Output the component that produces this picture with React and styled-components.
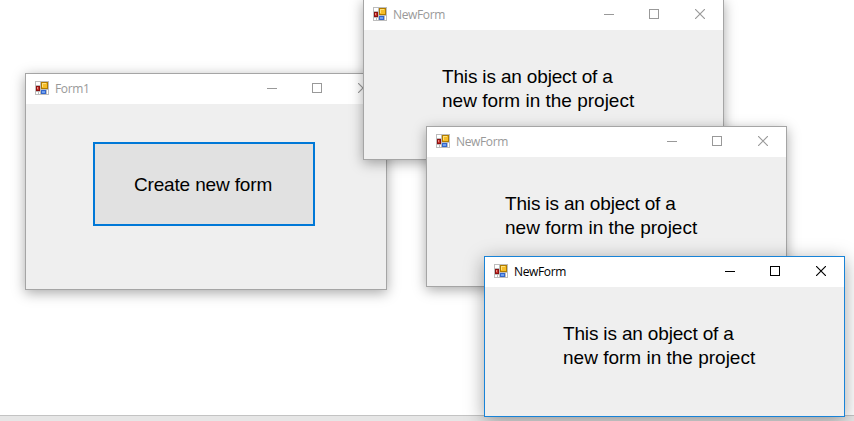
import React from "react";
import styled, { createGlobalStyle } from "styled-components";

const GlobalStyle = createGlobalStyle`
  *, *::before, *::after { box-sizing: border-box; }
  body { margin: 0; background: #fff; overflow: hidden; }
`;

const Desktop = styled.main`
  position: relative;
  display: flex;
  flex-direction: column;
  justify-content: flex-end;
  width: 854px;
  height: 421px;
  overflow: hidden;
  background: #fff;
  font-family: "Liberation Sans", Arial, sans-serif;
`;

const StatusStrip = styled.div`
  height: 6px;
  border-top: 1px solid #c3c3c3;
  background: #e6e6e6;
`;

/* Windows float freely on the desktop, so each one carries its own place. */
const Frame = styled.section`
  position: absolute;
  left: ${(p) => p.$x}px;
  top: ${(p) => p.$y}px;
  width: ${(p) => p.$w}px;
  height: ${(p) => p.$h}px;
  display: flex;
  flex-direction: column;
  border: 1px solid ${(p) => (p.$active ? "#1883d7" : "#a5a5a5")};
  background: #efefef;
  box-shadow: ${(p) =>
    p.$active
      ? "0 4px 18px rgba(0, 0, 0, 0.36)"
      : "0 3px 12px rgba(0, 0, 0, 0.34)"};
`;

const TitleBar = styled.header`
  flex: none;
  display: flex;
  align-items: center;
  height: 30px;
  padding: 0 18px 2px 9px;
  background: #fff;
  color: ${(p) => (p.$active ? "#000" : "#999")};
`;

const Title = styled.h1`
  flex: 1;
  margin: 2px 0 0 6px;
  font: 400 12px/16px "Open Sans", "Noto Sans", sans-serif;
  letter-spacing: -0.35px;
`;

const Controls = styled.div`
  display: flex;
  align-items: center;
`;

const ControlButton = styled.button`
  display: block;
  width: 10px;
  height: 10px;
  margin: 0 0 0 ${(p) => p.$gap || 0}px;
  padding: 0;
  border: 0;
  background: none;
  color: inherit;
`;

const Glyph = styled.svg`
  display: block;
`;

const Body = styled.div`
  flex: 1;
  padding: ${(p) => p.$pad};
`;

const Message = styled.p`
  margin: 0;
  color: #000;
  font-size: 19px;
  line-height: 24px;
  white-space: nowrap;
`;

const MessageLine = styled.span`
  display: block;
  letter-spacing: ${(p) => p.$spacing || 0}px;
`;

const CreateButton = styled.button`
  display: block;
  width: 222px;
  height: 84px;
  padding: 2px 2px 0 0;
  border: 2px solid #0078d7;
  background: #e1e1e1;
  color: #000;
  font: 19px/24px "Liberation Sans", Arial, sans-serif;
  letter-spacing: -0.15px;
`;

function FormIcon() {
  return (
    <Glyph width="14" height="14" viewBox="0 0 14 14" shapeRendering="crispEdges">
      <path fill="#bdbdbd" d="M0 0h14v14H0z" />
      <path fill="#fff" d="M1 1h4v3H1zM1 11h2v2H1zM4 11h1v2H4zM12 9h1v4h-1z" />
      <path fill="#b07c00" d="M6 1h7v7H6z" />
      <path fill="#f5bd28" d="M7 2h5v5H7z" />
      <path fill="#ffe07a" d="M7 2h4v1H8v3H7z" />
      <path fill="#8c1010" d="M1 5h4v5H1z" />
      <path fill="#c8332c" d="M2 6h2v3H2z" />
      <path fill="#eb8a80" d="M2 6h1v2H2z" />
      <path fill="#3366cc" d="M6 9h5v4H6z" />
      <path fill="#6fa0f0" d="M7 10h3v2H7z" />
    </Glyph>
  );
}

function WindowControls() {
  return (
    <Controls>
      <ControlButton aria-label="Minimize">
        <Glyph width="10" height="10" viewBox="0 0 10 10" shapeRendering="crispEdges">
          <path fill="currentColor" d="M0 5h10v1H0z" />
        </Glyph>
      </ControlButton>
      <ControlButton aria-label="Maximize" $gap={35}>
        <Glyph width="10" height="10" viewBox="0 0 10 10" shapeRendering="crispEdges">
          <path fill="none" stroke="currentColor" d="M.5.5h9v9h-9z" />
        </Glyph>
      </ControlButton>
      <ControlButton aria-label="Close" $gap={36}>
        <Glyph width="10" height="10" viewBox="0 0 10 10">
          <path fill="none" stroke="currentColor" strokeWidth="1.15" d="M0 0l10 10M10 0L0 10" />
        </Glyph>
      </ControlButton>
    </Controls>
  );
}

function FormWindow({ title, x, y, w, h, active, pad, children }) {
  return (
    <Frame $x={x} $y={y} $w={w} $h={h} $active={active}>
      <TitleBar $active={active}>
        <FormIcon />
        <Title>{title}</Title>
        <WindowControls />
      </TitleBar>
      <Body $pad={pad}>{children}</Body>
    </Frame>
  );
}

const newForms = [
  { x: 363, y: -1, active: false },
  { x: 426, y: 126, active: false },
  { x: 484, y: 256, active: true },
];

export default function App() {
  return (
    <>
      <GlobalStyle />
      <Desktop>
        <StatusStrip />
        <FormWindow title="Form1" x={25} y={73} w={362} h={217} pad="38px 0 0 67px">
          <CreateButton>Create new form</CreateButton>
        </FormWindow>
        {newForms.map((f) => (
          <FormWindow key={f.x} title="NewForm" w={361} h={161} pad="35px 0 0 78px" {...f}>
            <Message>
              <MessageLine $spacing={-0.16}>This is an object of a</MessageLine>
              <MessageLine>new form in the project</MessageLine>
            </Message>
          </FormWindow>
        ))}
      </Desktop>
    </>
  );
}
